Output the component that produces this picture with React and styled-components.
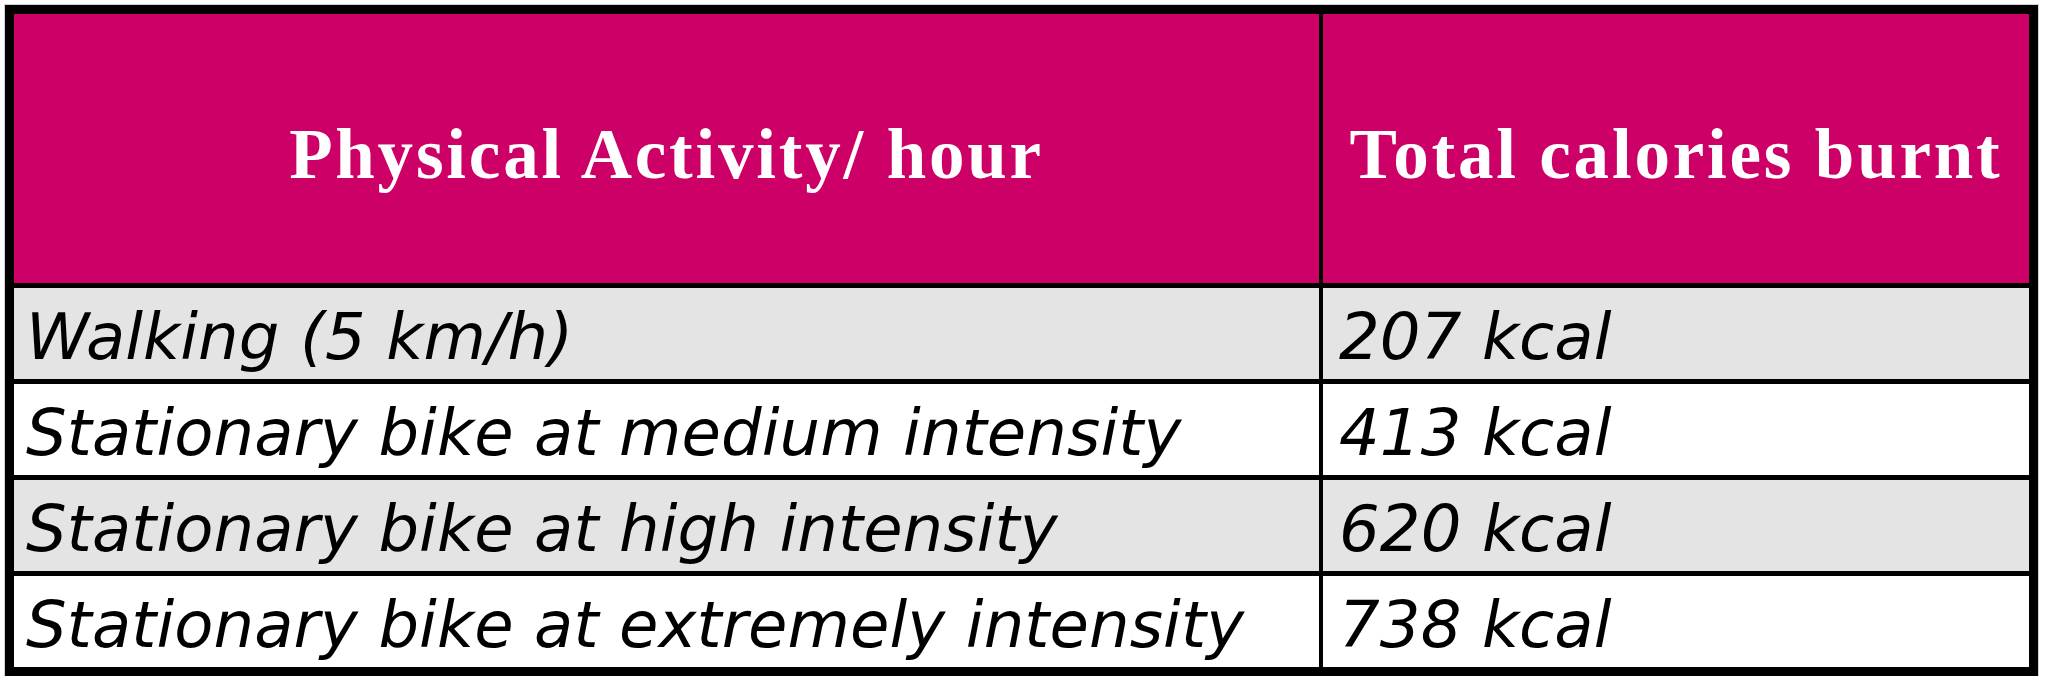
import React from "react";
import styled, { createGlobalStyle } from "styled-components";

const Global = createGlobalStyle`
  html, body { margin: 0; padding: 0; background: #ffffff; }
  body { padding: 5px 0 0 5px; }
`;

const Table = styled.div`
  display: grid;
  grid-template-columns: 1305px 706px;
  grid-template-rows: 269px repeat(4, 91px);
  column-gap: 4px;
  row-gap: 5px;
  width: max-content;
  background: #000000;
  border: 9px solid #000000;
  outline: 1px solid #d2d2d2;
`;

const HeaderCell = styled.div`
  display: flex;
  align-items: center;
  justify-content: center;
  padding-top: 12px;
  box-sizing: border-box;
  background: #cc0066;
  color: #ffffff;
  font-family: "Liberation Serif", "Times New Roman", serif;
  font-weight: bold;
  font-size: 71px;
  letter-spacing: 2.8px;
  white-space: nowrap;
`;

const Cell = styled.div`
  display: flex;
  align-items: center;
  padding: 6px 0 0 ${(p) => (p.$num ? 16 : 12)}px;
  box-sizing: border-box;
  background: ${(p) => (p.$shaded ? "#e4e4e4" : "#ffffff")};
  color: #000000;
  font-family: "DejaVu Sans", "Verdana", sans-serif;
  font-style: italic;
  font-size: 64px;
  letter-spacing: 0.1px;
  white-space: nowrap;
`;

const rows = [
  ["Walking (5 km/h)", "207 kcal"],
  ["Stationary bike at medium intensity", "413 kcal"],
  ["Stationary bike at high intensity", "620 kcal"],
  ["Stationary bike at extremely intensity", "738 kcal"],
];

export default function App() {
  return (
    <>
      <Global />
      <Table>
        <HeaderCell>Physical Activity/ hour</HeaderCell>
        <HeaderCell>Total calories burnt</HeaderCell>
        {rows.map(([a, b], i) => (
          <React.Fragment key={a}>
            <Cell $shaded={i % 2 === 0}>{a}</Cell>
            <Cell $shaded={i % 2 === 0} $num>
              {b}
            </Cell>
          </React.Fragment>
        ))}
      </Table>
    </>
  );
}
